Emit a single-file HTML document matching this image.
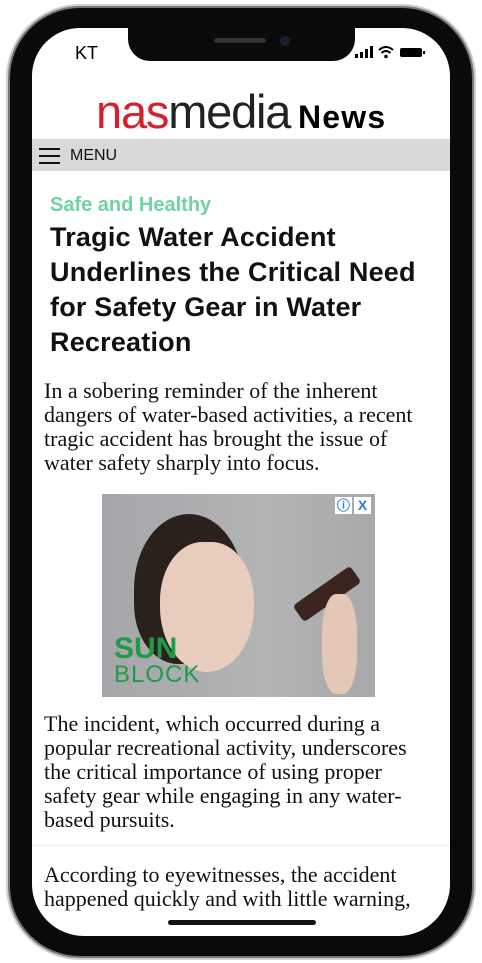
<!DOCTYPE html>
<html><head><style>
*{margin:0;padding:0;box-sizing:border-box}
body{width:482px;height:963px;background:#fff;position:relative;overflow:hidden;font-family:"Liberation Sans",sans-serif}
.body{position:absolute;left:10px;top:8px;width:462px;height:948px;background:#0a0a0a;border-radius:70px;box-shadow:0 0 0 2px #777,0 0 0 4px #cfcfcf}
.screen{position:absolute;left:32px;top:28px;width:418px;height:908px;background:#fff;border-radius:48px 48px 52px 52px;overflow:hidden}
.notch{position:absolute;left:96px;top:0;width:227px;height:33px;background:#0a0a0a;border-radius:0 0 22px 22px}
.abs{position:absolute}
p.s{font-family:"Liberation Serif",serif;font-size:22px;line-height:24px;color:#111;position:absolute;left:12px;width:410px;white-space:nowrap}
</style></head><body>
<div class="body"></div>
<div class="screen">
 <div class="notch"><div class="abs" style="left:86px;top:10px;width:52px;height:5px;border-radius:3px;background:#333"></div><div class="abs" style="left:152px;top:8px;width:10px;height:10px;border-radius:50%;background:#1a2030"></div></div>
 <div class="abs" style="left:43px;top:15px;font-size:18px;color:#000">KT</div>
 <svg class="abs" style="left:323px;top:18px" width="80" height="14" viewBox="0 0 80 14">
  <rect x="0" y="8" width="3" height="4" fill="#000"/><rect x="5" y="6" width="3" height="6" fill="#000"/><rect x="10" y="3" width="3" height="9" fill="#000"/><rect x="15" y="0" width="3" height="12" fill="#000"/>
  <path d="M24 4 Q31 -2 38 4" stroke="#000" stroke-width="2" fill="none"/><path d="M26.5 7 Q31 3 35.5 7" stroke="#000" stroke-width="2" fill="none"/><circle cx="31" cy="10.5" r="1.8" fill="#000"/>
  <rect x="45" y="2" width="22" height="9" rx="2" fill="#000"/><rect x="68" y="5" width="2" height="3" fill="#000"/>
 </svg>
 <div class="abs" style="left:64px;top:59px;font-size:47px;letter-spacing:-1.2px;font-weight:300;line-height:50px"><span style="color:#d51f2a">nas</span><span style="color:#222">media</span></div>
 <div class="abs" style="left:266px;top:71px;font-size:32px;font-weight:bold;color:#000;line-height:36px;letter-spacing:1.2px">News</div>
 <div class="abs" style="left:0;top:111px;width:418px;height:32px;background:#d9d9d9"></div>
 <div class="abs" style="left:7px;top:120px;width:21px;height:2px;background:#111;box-shadow:0 7px 0 #111,0 14px 0 #111"></div>
 <div class="abs" style="left:38px;top:119px;font-size:16px;color:#111">MENU</div>
 <div class="abs" style="left:18px;top:166px;font-size:20px;font-weight:bold;color:#6fd3a4">Safe and Healthy</div>
 <div class="abs" style="left:18px;top:192px;width:410px;font-size:27px;line-height:35px;font-weight:bold;color:#111;white-space:nowrap;letter-spacing:0.2px">Tragic Water Accident<br>Underlines the Critical Need<br>for Safety Gear in Water<br>Recreation</div>
 <p class="s" style="top:351px">In a sobering reminder of the inherent<br>dangers of water-based activities, a recent<br>tragic accident has brought the issue of<br>water safety sharply into focus.</p>
 <div class="abs" style="left:70px;top:466px;width:273px;height:203px;background:linear-gradient(90deg,#a5a6a9,#b4b4b6 60%,#a9a9ab)">
  <div class="abs" style="left:32px;top:20px;width:110px;height:150px;border-radius:50% 50% 40% 40%;background:#2a211d"></div>
  <div class="abs" style="left:58px;top:48px;width:94px;height:130px;border-radius:45% 45% 50% 50%;background:#e8cdbf"></div>
  <div class="abs" style="left:190px;top:90px;width:70px;height:20px;background:#3a2520;transform:rotate(-35deg);border-radius:4px"></div>
  <div class="abs" style="left:220px;top:100px;width:35px;height:100px;background:#e5c7b8;border-radius:40%"></div>
  <div class="abs" style="left:12px;top:140px;font-size:30px;font-weight:900;color:#1f9a49;line-height:30px">SUN</div>
  <div class="abs" style="left:12px;top:169px;font-size:24px;color:#1f9a49;line-height:24px;letter-spacing:1px">BLOCK</div>
  <div class="abs" style="left:233px;top:3px;width:17px;height:17px;background:#fff;color:#2b7de0;font-size:13px;text-align:center;line-height:17px;font-weight:bold">ⓘ</div>
  <div class="abs" style="left:252px;top:3px;width:17px;height:17px;background:#fff;color:#2b7de0;font-size:14px;text-align:center;line-height:17px;font-weight:bold">X</div>
 </div>
 <p class="s" style="top:684px">The incident, which occurred during a<br>popular recreational activity, underscores<br>the critical importance of using proper<br>safety gear while engaging in any water-<br>based pursuits.</p>
 <div class="abs" style="left:0;top:817px;width:418px;height:1px;background:#eee"></div>
 <p class="s" style="top:835px">According to eyewitnesses, the accident<br>happened quickly and with little warning,</p>
 <div class="abs" style="left:136px;top:892px;width:148px;height:5px;border-radius:3px;background:#111"></div>
</div>
</body></html>
